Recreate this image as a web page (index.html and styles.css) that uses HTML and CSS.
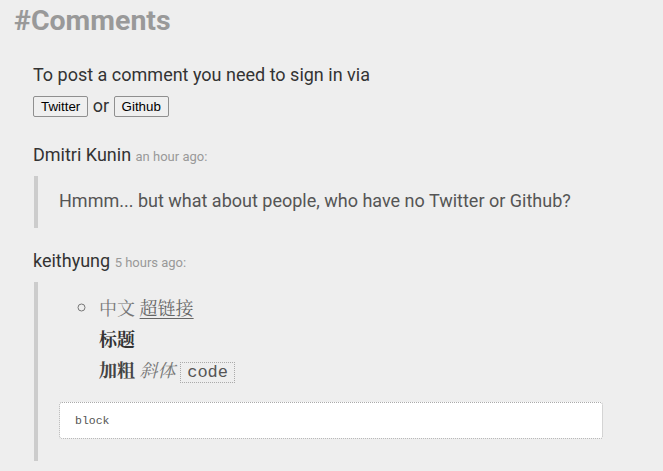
FILE: index.html
```html
<!DOCTYPE html>
<html>
<head>
<meta charset="utf-8">
<link rel="stylesheet" href="styles.css">
</head>
<body>
<section class="comments">
  <h2 class="title">#Comments</h2>
  <div class="body">
    <p class="signin">To post a comment you need to sign in via</p>
    <p class="buttons"><button class="btn">Twitter</button> or <button class="btn">Github</button></p>

    <div class="comment comment-first">
      <div class="meta"><span class="author">Dmitri Kunin</span> <span class="time">an hour ago:</span></div>
      <blockquote class="quote">
        <p class="text">Hmmm... but what about people, who have no Twitter or Github?</p>
      </blockquote>
    </div>

    <div class="comment">
      <div class="meta"><span class="author">keithyung</span> <span class="time">5 hours ago:</span></div>
      <blockquote class="quote quote-rich">
        <ul class="list">
          <li><span class="plain">中文</span> <a class="link" href="#">超链接</a>
            <div class="heading">标题</div>
            <div class="line"><strong>加粗</strong> <em>斜体</em> <code class="inline">code</code></div>
          </li>
        </ul>
        <pre class="block">block</pre>
      </blockquote>
    </div>
  </div>
</section>
</body>
</html>
```
FILE: styles.css
```css
html, body {
  margin: 0;
  padding: 0;
  background: #eeeeee;
}
body {
  font-family: Roboto, "Noto Sans CJK SC", sans-serif;
  color: #333;
}
.comments {
  padding: 3px 14px 0 14px;
}
.title {
  margin: 0;
  font-size: 28.5px;
  font-weight: 700;
  color: #999;
  line-height: 36px;
}
.body {
  padding-left: 19px;
}
.signin {
  margin: 24px 0 0;
  font-size: 18px;
  line-height: 24px;
  color: #333;
}
.buttons {
  margin: 7px 0 0;
  font-size: 18px;
  line-height: 24px;
}
.btn {
  font-family: "Liberation Sans", Arial, sans-serif;
  font-size: 13.333px;
  padding: 1px 7px;
  background: #efefef;
  border: 1px solid #8f8f8f;
  border-radius: 2px;
  color: #000;
  height: 21px;
  vertical-align: 1px;
}
.comment {
  margin-top: 21px;
}
.comment-first {
  margin-top: 25px;
}
.meta {
  font-size: 18px;
  line-height: 24px;
}
.author {
  color: #333;
}
.time {
  font-size: 13px;
  color: #999;
}
.quote {
  margin: 7px 0 0 1px;
  border-left: 4px solid #ccc;
  padding: 10px 0 12px 21px;
}
.text {
  margin: 0;
  font-size: 18px;
  line-height: 30px;
  color: #555;
}
.quote-rich {
  padding-top: 10px;
  padding-bottom: 22px;
}
.list {
  margin: 0;
  padding-left: 40px;
  list-style: circle;
  font-family: "Noto Serif CJK SC", "Noto Sans CJK SC", serif;
  font-size: 18px;
  line-height: 31px;
  color: #777;
}
.plain {
  color: #777;
}
.link {
  color: #666;
  text-decoration: underline;
  text-underline-offset: 3px;
}
.heading {
  font-weight: 700;
  color: #333;
}
.line strong {
  color: #444;
}
.line em {
  color: #777;
}
.inline {
  font-family: "Liberation Mono", monospace;
  font-size: 17px;
  border: 1px dotted #aaa;
  padding: 0 6px;
  color: #555;
  background: #eeeeee;
}
.block {
  margin: 14px 0 0 0;
  width: 512px;
  background: #fff;
  border: 1px dotted #aaa;
  border-radius: 3px;
  padding: 11px 15px 10px;
  font-family: "Liberation Mono", monospace;
  font-size: 11.5px;
  line-height: 14px;
  color: #555;
}
```
